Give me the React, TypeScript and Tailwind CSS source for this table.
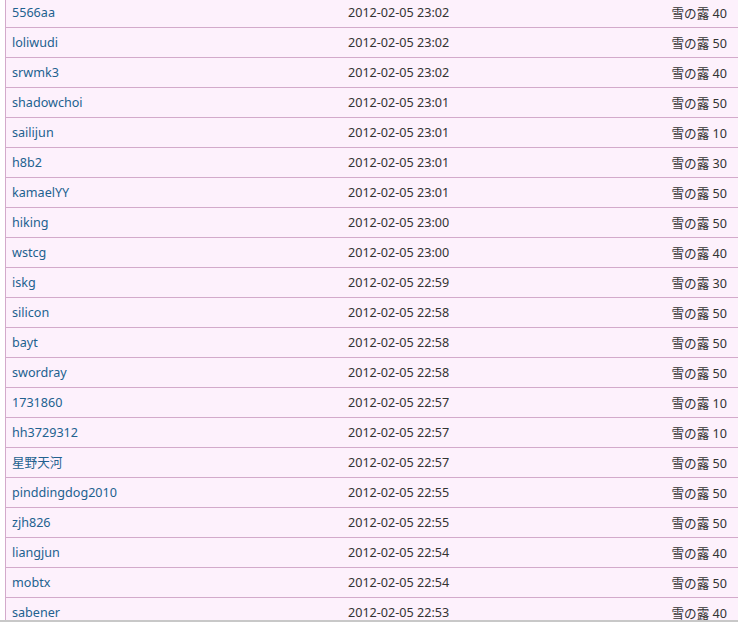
import React from "react";

interface Row {
  name: string;
  time: string;
  score: number;
}

const rows: Row[] = [
  { name: "5566aa", time: "2012-02-05 23:02", score: 40 },
  { name: "loliwudi", time: "2012-02-05 23:02", score: 50 },
  { name: "srwmk3", time: "2012-02-05 23:02", score: 40 },
  { name: "shadowchoi", time: "2012-02-05 23:01", score: 50 },
  { name: "sailijun", time: "2012-02-05 23:01", score: 10 },
  { name: "h8b2", time: "2012-02-05 23:01", score: 30 },
  { name: "kamaelYY", time: "2012-02-05 23:01", score: 50 },
  { name: "hiking", time: "2012-02-05 23:00", score: 50 },
  { name: "wstcg", time: "2012-02-05 23:00", score: 40 },
  { name: "iskg", time: "2012-02-05 22:59", score: 30 },
  { name: "silicon", time: "2012-02-05 22:58", score: 50 },
  { name: "bayt", time: "2012-02-05 22:58", score: 50 },
  { name: "swordray", time: "2012-02-05 22:58", score: 50 },
  { name: "1731860", time: "2012-02-05 22:57", score: 10 },
  { name: "hh3729312", time: "2012-02-05 22:57", score: 10 },
  { name: "星野天河", time: "2012-02-05 22:57", score: 50 },
  { name: "pinddingdog2010", time: "2012-02-05 22:55", score: 50 },
  { name: "zjh826", time: "2012-02-05 22:55", score: 50 },
  { name: "liangjun", time: "2012-02-05 22:54", score: 40 },
  { name: "mobtx", time: "2012-02-05 22:54", score: 50 },
  { name: "sabener", time: "2012-02-05 22:53", score: 40 },
];

const font = "font-['Noto_Sans','Noto_Sans_CJK_SC',sans-serif]";

export default function App() {
  return (
    <div className={`h-[622px] overflow-hidden bg-white pl-[5px] text-[12.6px] ${font}`}>
      <div className="-mt-[2px] border-l border-[#d3aacb] bg-[#fdf1fc]">
        {rows.map((r, i) => (
          <div
            key={i}
            className="flex h-[30px] items-center border-b border-[#d3aacb] pt-[2px] text-[#333]"
          >
            <a href="#" className="w-[342px] shrink-0 pl-[6px] text-[#22618f]">
              {r.name}
            </a>
            <span className="flex-1">{r.time}</span>
            <span className="pr-[11px]">
              <span className="font-['Noto_Sans_CJK_JP',sans-serif]">雪の露</span> {r.score}
            </span>
          </div>
        ))}
      </div>
      <div className="fixed bottom-0 left-0 right-0 h-[2px] bg-[#c8c8c8]" />
    </div>
  );
}
